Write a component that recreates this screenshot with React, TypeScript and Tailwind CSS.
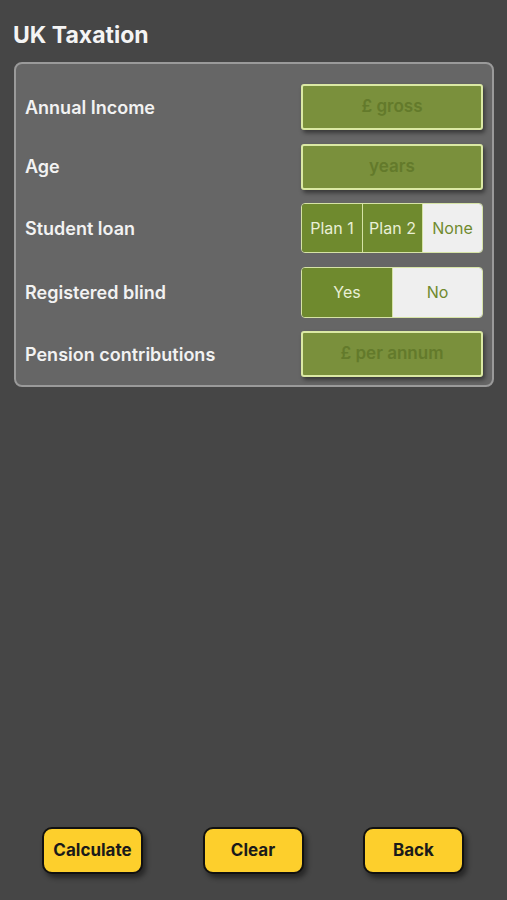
const font = { fontFamily: 'Inter, "Liberation Sans", sans-serif' };

function Field({ placeholder }: { placeholder: string }) {
  return (
    <div className="flex h-[46px] w-[182px] items-center justify-center rounded-[3px] border-2 border-[#dbe9a4] bg-[#7a903c] text-[17px] font-semibold text-[#637a2b] shadow-[2px_3px_4px_rgba(0,0,0,0.45)]">
      {placeholder}
    </div>
  );
}

function Segments({ items, active, height }: { items: { label: string; w: string }[]; active: number[]; height: string }) {
  return (
    <div className={`flex ${height} w-[182px] overflow-hidden rounded-[4px] border border-[#d6e3a6]`}>
      {items.map((item, i) => {
        const on = active.includes(i);
        return (
          <div
            key={item.label}
            className={`flex items-center justify-center text-[16px] ${item.w} ${
              on ? 'bg-[#6f8a2e] text-[#e9efd6]' : 'bg-[#efefef] text-[#6f8a2e]'
            } ${i > 0 ? 'border-l border-[#d6e3a6]' : ''}`}
          >
            {item.label}
          </div>
        );
      })}
    </div>
  );
}

function Row({ label, children }: { label: string; children: React.ReactNode }) {
  return (
    <div className="flex items-center justify-between">
      <span className="text-[18px] font-semibold text-[#f2f2f2]">{label}</span>
      {children}
    </div>
  );
}

function YellowButton({ label }: { label: string }) {
  return (
    <button className="flex h-[47px] w-[101px] items-center justify-center rounded-[10px] border-2 border-[#111] bg-[#fdcf2c] text-[17px] font-bold text-[#1a1a1a] shadow-[3px_4px_5px_rgba(0,0,0,0.45)]">
      {label}
    </button>
  );
}

export default function App() {
  return (
    <div className="flex h-[900px] w-[507px] flex-col bg-[#464646]" style={font}>
      <h1 className="pl-[13px] pt-[22px] text-[23px] font-bold leading-[26px] text-[#f4f4f4]">UK Taxation</h1>

      <div className="ml-[14px] mr-[13px] mt-[14px] flex flex-col gap-[13.5px] rounded-[8px] border-2 border-[#9a9a9a] bg-[#666666] pb-[8px] pl-[9px] pr-[9px] pt-[20px]">
        <Row label="Annual Income">
          <Field placeholder="£ gross" />
        </Row>
        <Row label="Age">
          <Field placeholder="years" />
        </Row>
        <Row label="Student loan">
          <Segments
            height="h-[50px]"
            active={[0, 1]}
            items={[
              { label: 'Plan 1', w: 'w-[60px]' },
              { label: 'Plan 2', w: 'w-[60px]' },
              { label: 'None', w: 'flex-1' },
            ]}
          />
        </Row>
        <Row label="Registered blind">
          <Segments
            height="h-[51px]"
            active={[0]}
            items={[
              { label: 'Yes', w: 'w-[90px]' },
              { label: 'No', w: 'flex-1' },
            ]}
          />
        </Row>
        <Row label="Pension contributions">
          <Field placeholder="£ per annum" />
        </Row>
      </div>

      <div className="flex-1" />

      <div className="flex justify-between pb-[26px] pl-[42px] pr-[43px]">
        <YellowButton label="Calculate" />
        <YellowButton label="Clear" />
        <YellowButton label="Back" />
      </div>
    </div>
  );
}
